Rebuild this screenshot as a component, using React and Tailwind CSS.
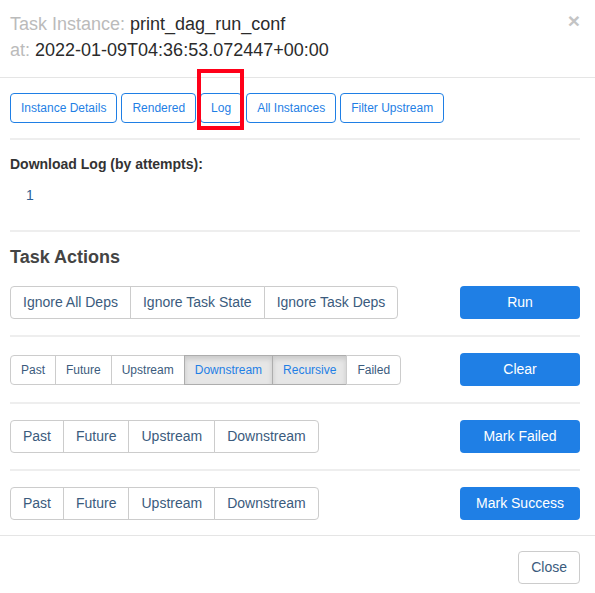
import React from 'react';

const tabs = ['Instance Details', 'Rendered', 'Log', 'All Instances', 'Filter Upstream'];

function Group({ items, small, active = [] }) {
  return (
    <div className="flex">
      {items.map((item, i) => {
        const on = active.includes(item);
        return (
          <button
            key={item}
            className={
              (small ? 'h-[30px] px-[10px] text-[12px] ' : 'h-[33px] px-[12px] text-[14px] ') +
              (i === 0 ? 'rounded-l-[4px] ' : '-ml-px ') +
              (i === items.length - 1 ? 'rounded-r-[4px] ' : '') +
              (on
                ? 'bg-[#e6e6e6] border-[#adadad] text-[#1f7fe5] shadow-[inset_0_3px_5px_rgba(0,0,0,0.125)] '
                : 'bg-white border-[#cccccc] text-[#3b5b7d] ') +
              'border whitespace-nowrap'
            }
          >
            {item}
          </button>
        );
      })}
    </div>
  );
}

function ActionRow({ items, small, active, label, last }) {
  return (
    <div>
      <div className="flex items-center justify-between">
        <Group items={items} small={small} active={active} />
        <button className="h-[33px] w-[120px] rounded-[4px] bg-[#1f7fe5] text-[14px] text-white">
          {label}
        </button>
      </div>
      {!last && <div className="my-[16px] h-[2px] bg-[#eeeeee]"></div>}
    </div>
  );
}

export default function App() {
  return (
    <div className="w-[595px] h-[593px] bg-white text-[#333333] font-['Liberation_Sans',Arial,sans-serif] overflow-hidden">
      {/* Header */}
      <div className="relative pt-[11px] pb-[14px] px-[10px] border-b border-[#e5e5e5]">
        <div className="text-[18px] leading-[26px]">
          <span className="text-[#bbbbbb]">Task Instance: </span>
          <span className="text-[#2b2b2b]">print_dag_run_conf</span>
        </div>
        <div className="text-[18px] leading-[26px]">
          <span className="text-[#bbbbbb]">at: </span>
          <span className="text-[#2b2b2b]">2022-01-09T04:36:53.072447+00:00</span>
        </div>
        <span className="absolute right-[15px] top-[8px] text-[21px] font-bold leading-[26px] text-[#c4c4c4]">×</span>
      </div>

      {/* Body */}
      <div className="pl-[10px] pr-[15px] pt-[15px]">
        <div className="flex gap-[4px]">
          {tabs.map((t) => (
            <div key={t} className="relative">
              <button className="h-[30px] px-[10px] rounded-[4px] border border-[#1f7fe5] text-[12px] text-[#1f7fe5] whitespace-nowrap">
                {t}
              </button>
              {t === 'Log' && (
                <div className="absolute left-[-3px] right-[-2px] top-[-24px] bottom-[-7px] border-[4px] border-[#ff0019]"></div>
              )}
            </div>
          ))}
        </div>

        <div className="mt-[15px] h-[2px] bg-[#eeeeee]"></div>

        <div className="mt-[14px] text-[14px] leading-[20px] font-bold">Download Log (by attempts):</div>
        <div className="mt-[11px] pl-[16px] text-[14px] leading-[20px] text-[#2f5f93]">1</div>

        <div className="mt-[25px] h-[2px] bg-[#eeeeee]"></div>

        <div className="mt-[12px] text-[18px] leading-[26px] font-semibold text-[#444444]">Task Actions</div>

        <div className="mt-[16px]">
          <ActionRow items={['Ignore All Deps', 'Ignore Task State', 'Ignore Task Deps']} label="Run" />
          <ActionRow
            items={['Past', 'Future', 'Upstream', 'Downstream', 'Recursive', 'Failed']}
            small
            active={['Downstream', 'Recursive']}
            label="Clear"
          />
          <ActionRow items={['Past', 'Future', 'Upstream', 'Downstream']} label="Mark Failed" />
          <ActionRow items={['Past', 'Future', 'Upstream', 'Downstream']} label="Mark Success" last />
        </div>
      </div>

      {/* Footer */}
      <div className="mt-[15px] border-t border-[#e5e5e5] pt-[15px] pr-[15px] flex justify-end">
        <button className="h-[33px] px-[12px] rounded-[4px] border border-[#cccccc] text-[14px] text-[#3b5b7d]">
          Close
        </button>
      </div>
    </div>
  );
}
